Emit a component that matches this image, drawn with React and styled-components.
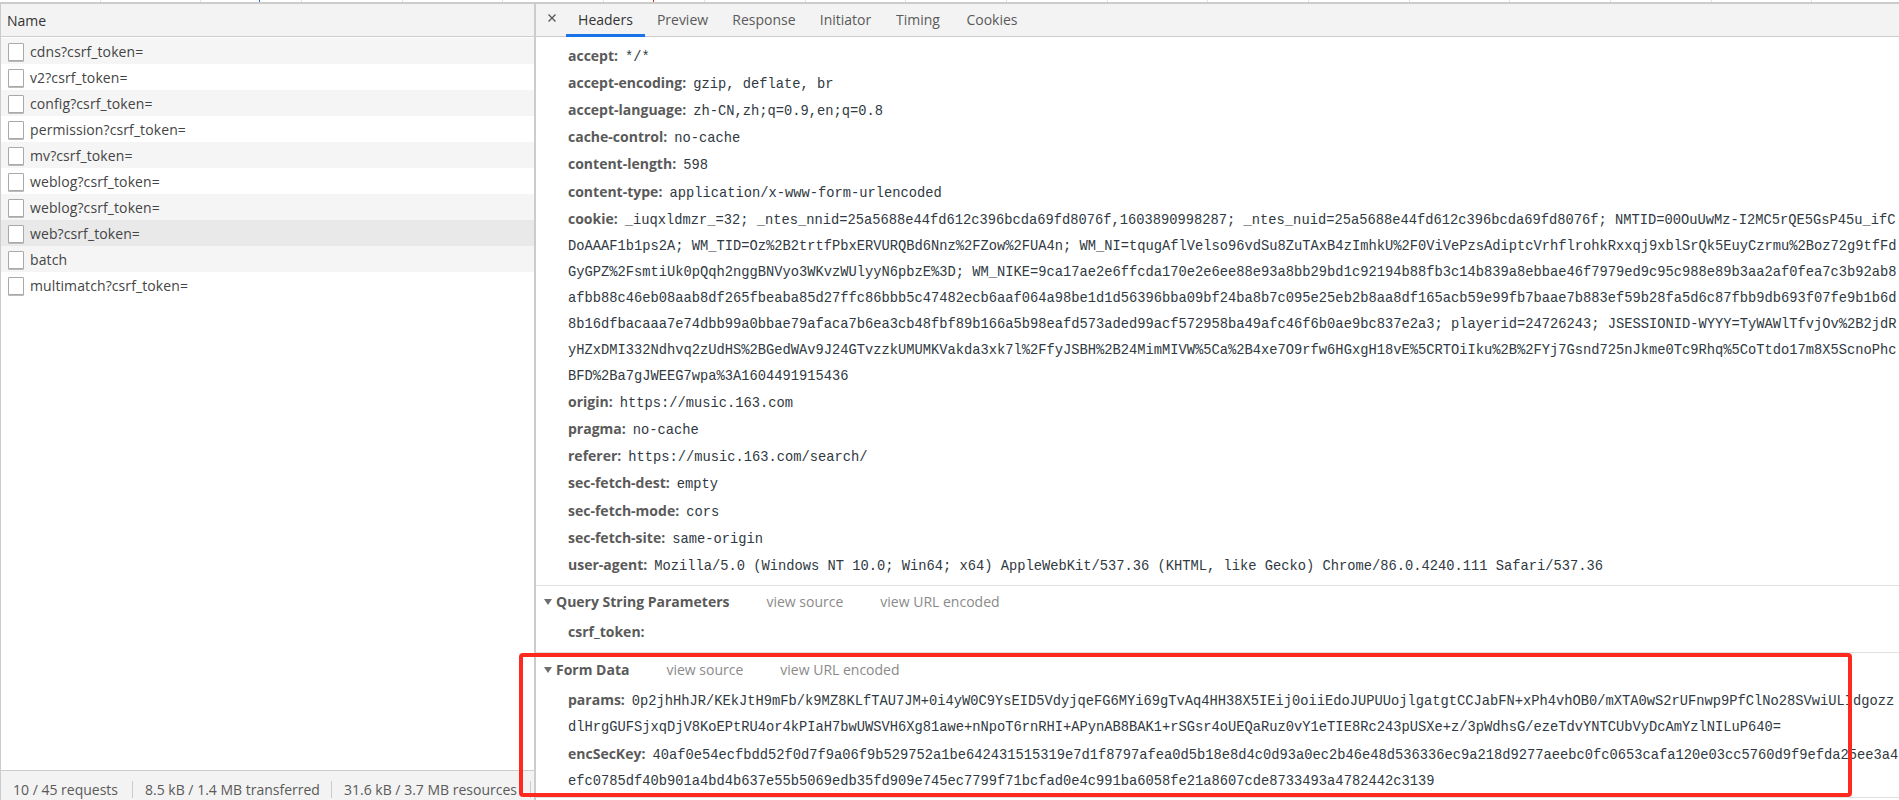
import React from 'react';
import styled, { createGlobalStyle } from 'styled-components';

const sans = '"Open Sans", "Noto Sans", sans-serif';
const mono = '"Liberation Mono", monospace';

const GlobalStyle = createGlobalStyle`
  html, body {
    background: #fff;
    height: 800px;
    margin: 0;
    overflow: hidden;
  }
`;

const Page = styled.div`
  display: flex;
  flex-direction: column;
  font-family: ${sans};
  height: 800px;
  overflow: hidden;
  width: 1899px;
`;

const Timeline = styled.div`
  border-bottom: 2px solid #ccc;
  display: flex;
  flex: none;
  height: 2px;
  position: relative;
`;

const Tick = styled.div`
  border-right: 1px solid #e2e2e2;
  flex: none;
  width: 99.7px;
`;

const Marker = styled.div`
  background: ${(p) => p.$color};
  height: 2px;
  left: ${(p) => p.$left}px;
  position: absolute;
  top: 0;
  width: 1px;
`;

const Panes = styled.div`
  display: flex;
  flex: 1;
  min-height: 0;
`;

const ListPane = styled.div`
  border-left: 1px solid #ccc;
  border-right: 2px solid #ccc;
  display: flex;
  flex: none;
  flex-direction: column;
  width: 533px;
`;

const ListHeader = styled.div`
  align-items: center;
  background: #f3f3f3;
  border-bottom: 1px solid #ccc;
  color: #333;
  display: flex;
  flex: none;
  font-size: 14px;
  height: 32px;
  padding-left: 6px;
`;

const Rows = styled.div`
  flex: 1;
  padding-top: 1px;
`;

const Row = styled.div`
  align-items: center;
  background: ${(p) => (p.$selected ? '#e9e9e9' : p.$odd ? '#f5f5f5' : '#fff')};
  box-sizing: border-box;
  color: #444;
  display: flex;
  font-size: 14px;
  gap: 6px;
  height: 26px;
  letter-spacing: 0.1px;
  padding: 1px 0 0 7px;
`;

const FileIcon = styled.div`
  background: #fff;
  border: 1px solid #a9a9a9;
  border-radius: 1px;
  box-shadow: 0 1px 0 #bbb;
  box-sizing: border-box;
  flex: none;
  height: 18px;
  width: 16px;
`;

const StatusBar = styled.div`
  align-items: center;
  background: #f3f3f3;
  border-top: 1px solid #ccc;
  color: #5a5a5a;
  display: flex;
  flex: none;
  font-size: 14px;
  height: 29px;
  white-space: nowrap;
`;

const StatusItem = styled.div`
  align-items: center;
  border-right: 1px solid #ccc;
  box-sizing: border-box;
  display: flex;
  height: 17px;
  margin-top: 7px;
  padding-left: 12px;
  width: ${(p) => p.$width}px;
`;

const DetailPane = styled.div`
  display: flex;
  flex: 1;
  flex-direction: column;
  min-width: 0;
`;

const TabBar = styled.div`
  align-items: stretch;
  background: #f3f3f3;
  border-bottom: 1px solid #ccc;
  display: flex;
  flex: none;
  height: 32px;
`;

const CloseIcon = styled.svg`
  align-self: center;
  flex: none;
  height: 8px;
  margin: -4px 10px 0 12px;
  width: 8px;
`;

const Tab = styled.div`
  align-items: center;
  border-bottom: 3px solid ${(p) => (p.$active ? '#1a73e8' : 'transparent')};
  box-sizing: border-box;
  color: ${(p) => (p.$active ? '#333' : '#5a5a5a')};
  display: flex;
  font-size: 14px;
  height: 33px;
  justify-content: center;
  width: ${(p) => p.$width}px;
`;

const Section = styled.div`
  border-bottom: 1px solid #e0e0e0;
  padding: ${(p) => p.$padding};
  position: relative;
`;

const SectionTitle = styled.div`
  align-items: center;
  display: flex;
  font-size: 14px;
  height: 30px;
  margin-bottom: 2px;
  padding-left: 8px;
  white-space: nowrap;
`;

const Caret = styled.svg`
  flex: none;
  height: 6px;
  margin-right: 4px;
  width: 8px;
`;

const TitleText = styled.span`
  color: #5a5a5a;
  font-weight: 700;
`;

const TitleLink = styled.span`
  color: #8a8a8a;
  margin-left: 37px;
`;

const Field = styled.div`
  padding: 0.6px 0 0.6px 32px;
`;

const Line = styled.div`
  font-size: 14px;
  height: 26px;
  line-height: 26px;
  white-space: nowrap;
`;

const Key = styled.span`
  color: #5a5a5a;
  font-weight: 700;
  margin-right: 7px;
`;

const Value = styled.span`
  color: #303942;
  font-family: ${mono};
  font-size: 13.75px;
`;

const RedBox = styled.div`
  border: 4px solid #ff2a1f;
  border-radius: 4px;
  box-sizing: border-box;
  height: 144px;
  left: -17px;
  pointer-events: none;
  position: absolute;
  top: 0;
  width: 1333px;
`;

const requests = [
  'cdns?csrf_token=',
  'v2?csrf_token=',
  'config?csrf_token=',
  'permission?csrf_token=',
  'mv?csrf_token=',
  'weblog?csrf_token=',
  'weblog?csrf_token=',
  'web?csrf_token=',
  'batch',
  'multimatch?csrf_token=',
];

const headers = [
  ['accept', ['*/*']],
  ['accept-encoding', ['gzip, deflate, br']],
  ['accept-language', ['zh-CN,zh;q=0.9,en;q=0.8']],
  ['cache-control', ['no-cache']],
  ['content-length', ['598']],
  ['content-type', ['application/x-www-form-urlencoded']],
  ['cookie', [
    '_iuqxldmzr_=32; _ntes_nnid=25a5688e44fd612c396bcda69fd8076f,1603890998287; _ntes_nuid=25a5688e44fd612c396bcda69fd8076f; NMTID=00OuUwMz-I2MC5rQE5GsP45u_ifC',
    'DoAAAF1b1ps2A; WM_TID=Oz%2B2trtfPbxERVURQBd6Nnz%2FZow%2FUA4n; WM_NI=tqugAflVelso96vdSu8ZuTAxB4zImhkU%2F0ViVePzsAdiptcVrhflrohkRxxqj9xblSrQk5EuyCzrmu%2Boz72g9tfFd',
    'GyGPZ%2FsmtiUk0pQqh2nggBNVyo3WKvzWUlyyN6pbzE%3D; WM_NIKE=9ca17ae2e6ffcda170e2e6ee88e93a8bb29bd1c92194b88fb3c14b839a8ebbae46f7979ed9c95c988e89b3aa2af0fea7c3b92ab8',
    'afbb88c46eb08aab8df265fbeaba85d27ffc86bbb5c47482ecb6aaf064a98be1d1d56396bba09bf24ba8b7c095e25eb2b8aa8df165acb59e99fb7baae7b883ef59b28fa5d6c87fbb9db693f07fe9b1b6d',
    '8b16dfbacaaa7e74dbb99a0bbae79afaca7b6ea3cb48fbf89b166a5b98eafd573aded99acf572958ba49afc46f6b0ae9bc837e2a3; playerid=24726243; JSESSIONID-WYYY=TyWAWlTfvjOv%2B2jdR',
    'yHZxDMI332Ndhvq2zUdHS%2BGedWAv9J24GTvzzkUMUMKVakda3xk7l%2FfyJSBH%2B24MimMIVW%5Ca%2B4xe7O9rfw6HGxgH18vE%5CRTOiIku%2B%2FYj7Gsnd725nJkme0Tc9Rhq%5CoTtdo17m8X5ScnoPhc',
    'BFD%2Ba7gJWEEG7wpa%3A1604491915436',
  ]],
  ['origin', ['https://music.163.com']],
  ['pragma', ['no-cache']],
  ['referer', ['https://music.163.com/search/']],
  ['sec-fetch-dest', ['empty']],
  ['sec-fetch-mode', ['cors']],
  ['sec-fetch-site', ['same-origin']],
  ['user-agent', ['Mozilla/5.0 (Windows NT 10.0; Win64; x64) AppleWebKit/537.36 (KHTML, like Gecko) Chrome/86.0.4240.111 Safari/537.36']],
];

const formData = [
  ['params', [
    '0p2jhHhJR/KEkJtH9mFb/k9MZ8KLfTAU7JM+0i4yW0C9YsEID5VdyjqeFG6MYi69gTvAq4HH38X5IEij0oiiEdoJUPUUojlgatgtCCJabFN+xPh4vhOB0/mXTA0wS2rUFnwp9PfClNo28SVwiULIdgozz',
    'dlHrgGUFSjxqDjV8KoEPtRU4or4kPIaH7bwUWSVH6Xg81awe+nNpoT6rnRHI+APynAB8BAK1+rSGsr4oUEQaRuz0vY1eTIE8Rc243pUSXe+z/3pWdhsG/ezeTdvYNTCUbVyDcAmYzlNILuP640=',
  ]],
  ['encSecKey', [
    '40af0e54ecfbdd52f0d7f9a06f9b529752a1be642431515319e7d1f8797afea0d5b18e8d4c0d93a0ec2b46e48d536336ec9a218d9277aeebc0fc0653cafa120e03cc5760d9f9efda25ee3a4',
    'efc0785df40b901a4bd4b637e55b5069edb35fd909e745ec7799f71bcfad0e4c991ba6058fe21a8607cde8733493a4782442c3139',
  ]],
];

const tabs = [
  ['Headers', 79],
  ['Preview', 75],
  ['Response', 88],
  ['Initiator', 75],
  ['Timing', 70],
  ['Cookies', 78],
];

const HeaderField = ({ name, lines }) => (
  <Field>
    {lines.map((line, i) => (
      <Line key={line}>
        {i === 0 && <Key>{name}:</Key>}
        <Value>{line}</Value>
      </Line>
    ))}
  </Field>
);

const SectionHead = ({ title }) => (
  <SectionTitle>
    <Caret viewBox="0 0 8 6"><polygon points="0,0 8,0 4,6" fill="#6e6e6e" /></Caret>
    <TitleText>{title}</TitleText>
    <TitleLink>view source</TitleLink>
    <TitleLink>view URL encoded</TitleLink>
  </SectionTitle>
);

const App = () => (
  <Page>
    <GlobalStyle />
    <Timeline>
      {Array.from({ length: 19 }, (_, i) => <Tick key={i} />)}
      <Marker $color="#1a73e8" $left={259} />
      <Marker $color="#d93025" $left={653} />
    </Timeline>
    <Panes>
      <ListPane>
        <ListHeader>Name</ListHeader>
        <Rows>
          {requests.map((name, i) => (
            <Row key={i} $odd={i % 2 === 0} $selected={name === 'web?csrf_token='}>
              <FileIcon />
              {name}
            </Row>
          ))}
        </Rows>
        <StatusBar>
          <StatusItem $width={132}>10 / 45 requests</StatusItem>
          <StatusItem $width={199}>8.5 kB / 1.4 MB transferred</StatusItem>
          <StatusItem $width={199}>31.6 kB / 3.7 MB resources</StatusItem>
        </StatusBar>
      </ListPane>
      <DetailPane>
        <TabBar>
          <CloseIcon viewBox="0 0 8 8">
            <path d="M0.5 0.5 L7.5 7.5 M7.5 0.5 L0.5 7.5" stroke="#5a5a5a" strokeWidth="1.4" />
          </CloseIcon>
          {tabs.map(([label, width]) => (
            <Tab key={label} $width={width} $active={label === 'Headers'}>{label}</Tab>
          ))}
        </TabBar>
        <Section $padding="5px 0 6px">
          {headers.map(([name, lines]) => <HeaderField key={name} name={name} lines={lines} />)}
        </Section>
        <Section $padding="1px 0 6px">
          <SectionHead title="Query String Parameters" />
          <Field>
            <Line><Key>csrf_token:</Key></Line>
          </Field>
        </Section>
        <Section $padding="2px 0 4px">
          <SectionHead title="Form Data" />
          {formData.map(([name, lines]) => <HeaderField key={name} name={name} lines={lines} />)}
          <RedBox />
        </Section>
      </DetailPane>
    </Panes>
  </Page>
);

export default App;
